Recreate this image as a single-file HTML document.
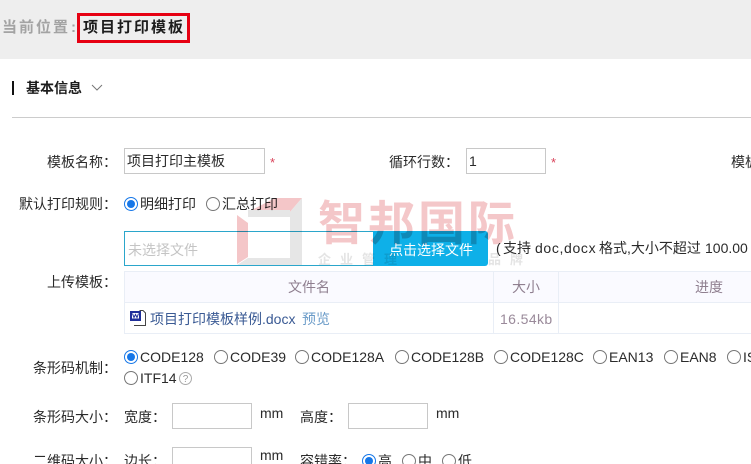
<!DOCTYPE html>
<html lang="zh"><head><meta charset="utf-8"><title>项目打印模板</title>
<style>
*{box-sizing:border-box}
html,body{margin:0;padding:0;overflow:hidden;width:751px;height:464px}
body{background:#fff;position:relative;font-family:"Liberation Sans","Noto Sans CJK SC",sans-serif;font-size:14px;color:#2a2a2a}
.a{position:absolute;white-space:nowrap;line-height:18px}
.l{position:absolute;white-space:nowrap;line-height:18px;text-align:right;width:105px;left:12px;color:#2a2a2a}
.i{position:absolute;border:1px solid #c8c8c8;background:#fff;height:26px;line-height:24px;padding-left:2px;color:#2a2a2a}
.r{position:absolute;width:14px;height:14px;border-radius:50%;border:1px solid #777;background:#fff}
.r.on{border:1px solid #1677e8}
.r.on:after{content:"";position:absolute;left:2px;top:2px;width:8px;height:8px;border-radius:50%;background:#1677e8}
.s{color:#d9435a;font-size:13px}
.c{font-size:14px}
.w{mix-blend-mode:multiply}
</style></head><body>
<div style="position:absolute;left:0;top:0;width:751px;height:59px;background:#eee"></div>
<div class="a" style="left:2px;top:19px;font-size:15px;font-weight:bold;color:#a3a3a3;letter-spacing:2px">当前位置</div>
<div class="a" style="left:71px;top:19px;font-size:15px;font-weight:bold;color:#a3a3a3">:</div>
<div style="position:absolute;left:77px;top:13px;width:113px;height:30px;border:3px solid #e60012"></div>
<div class="a" style="left:83px;top:19px;font-size:15px;font-weight:bold;color:#1c1c1c;letter-spacing:2px">项目打印模板</div>
<div style="position:absolute;left:12px;top:81px;width:2px;height:14px;background:#111"></div>
<div class="a" style="left:26px;top:79px;font-weight:bold;color:#1c1c1c">基本信息</div>
<svg style="position:absolute;left:90px;top:83px" width="14" height="10"><path d="M2 2 L7 7 L12 2" fill="none" stroke="#777" stroke-width="1"/></svg>
<div style="position:absolute;left:12px;top:117px;width:739px;height:1px;background:#ccc"></div>

<div class="l" style="top:153px">模板名称：</div>
<div class="i" style="left:124px;top:148px;width:141px">项目打印主模板</div>
<div class="a s" style="left:270px;top:154px">*</div>
<div class="a" style="left:389px;top:153px">循环行数：</div>
<div class="i" style="left:466px;top:148px;width:80px">1</div>
<div class="a s" style="left:551px;top:154px">*</div>
<div class="a" style="left:731px;top:153px;width:20px;overflow:hidden">模板类型</div>

<div class="l" style="top:195px">默认打印规则：</div>
<div class="r on" style="left:124px;top:197px"></div><div class="a" style="left:140px;top:195px">明细打印</div>
<div class="r" style="left:206px;top:197px"></div><div class="a" style="left:222px;top:195px">汇总打印</div>

<div style="position:absolute;left:124px;top:231px;width:250px;height:35px;border:1px solid #2ba6cb;border-right:none;background:transparent"></div>
<div class="a" style="left:128px;top:241px;color:#c4c4c4">未选择文件</div>
<div class="a" style="left:373px;top:231px;width:115px;height:35px;background:#0eb0e8;color:#fff;border-radius:0 3px 3px 0;line-height:39px;padding-left:16px">点击选择文件</div>
<div class="a" style="left:496px;top:239px">(</div>
<div class="a" style="left:503px;top:239px">支持</div>
<div class="a" style="left:535px;top:239px;letter-spacing:.65px">doc,docx</div>
<div class="a" style="left:599px;top:239px">格式,大小不超过</div>
<div class="a" style="left:705px;top:239px">100.00</div>

<svg class="w" style="position:absolute;left:230px;top:192px" width="80" height="80">
<polygon points="45,6 72,6 60,20 18,20" fill="#f4c6c8"/>
<polygon points="72,6 72,73 7,73 18,66 60,66 60,20" fill="#e6e6e6"/>
<polygon points="18,18 60,18 60,25 18,25" fill="#e6e6e6"/>
<polygon points="7,23 18,31 18,65 7,72" fill="#f4c6c8"/>
</svg>
<div class="a w" style="left:318px;top:195px;font-size:47px;line-height:50px;color:#f4c7c9;letter-spacing:3px;font-family:'Noto Sans CJK SC',sans-serif;font-weight:700">智邦国际</div>
<div class="a w" style="left:318px;top:251px;font-size:13px;color:#e4e4e4;letter-spacing:9px;font-weight:bold">企业管理</div>
<div class="a w" style="left:488px;top:251px;font-size:13px;color:#e4e4e4;letter-spacing:9px;font-weight:bold;width:40px;overflow:hidden">品牌</div>

<div class="l" style="top:273px">上传模板：</div>
<div style="position:absolute;left:124px;top:271px;width:627px;height:63px;border:1px solid #e9eef6;border-right:none;background:#fff"></div>
<div style="position:absolute;left:125px;top:272px;width:626px;height:31px;background:#fafaff;border-bottom:1px solid #e9eef6"></div>
<div style="position:absolute;left:493px;top:272px;width:1px;height:61px;background:#e9eef6"></div>
<div style="position:absolute;left:558px;top:272px;width:1px;height:61px;background:#e9eef6"></div>
<div class="a" style="left:288px;top:278px;color:#8f7f8f">文件名</div>
<div class="a" style="left:512px;top:278px;color:#8f7f8f">大小</div>
<div class="a" style="left:695px;top:278px;color:#8f7f8f">进度</div>
<svg style="position:absolute;left:130px;top:310px" width="17" height="16"><path d="M9.500 .5H13L15.500 3V15.500H4" fill="#fff" stroke="#444"/><rect x="0" y="1" width="11" height="10" fill="#1f2f9a"/><rect x="2" y="3" width="7" height="5.500" fill="#fff"/><path d="M2.500 3.500L4 7.500L5.500 4.500L7 7.500L8.500 3.500" fill="none" stroke="#1f2f9a"/></svg>
<div class="a" style="left:150px;top:310px;color:#3a5a94">项目打印模板样例.docx</div>
<div class="a" style="left:302px;top:310px;color:#6a9bc8">预览</div>
<div class="a" style="left:500px;top:310px;color:#9a8a9a;letter-spacing:.4px">16.54kb</div>

<div class="l" style="top:359px">条形码机制：</div>
<div class="r on" style="left:124px;top:350px"></div><div class="a c" style="left:140px;top:348px">CODE128</div>
<div class="r" style="left:214px;top:350px"></div><div class="a c" style="left:230px;top:348px">CODE39</div>
<div class="r" style="left:295px;top:350px"></div><div class="a c" style="left:311px;top:348px">CODE128A</div>
<div class="r" style="left:395px;top:350px"></div><div class="a c" style="left:411px;top:348px">CODE128B</div>
<div class="r" style="left:494px;top:350px"></div><div class="a c" style="left:510px;top:348px">CODE128C</div>
<div class="r" style="left:593px;top:350px"></div><div class="a c" style="left:609px;top:348px">EAN13</div>
<div class="r" style="left:664px;top:350px"></div><div class="a c" style="left:680px;top:348px">EAN8</div>
<div class="r" style="left:727px;top:350px"></div><div class="a c" style="left:743px;top:348px;width:8px;overflow:hidden">ISBN</div>
<div class="r" style="left:124px;top:371px"></div><div class="a c" style="left:140px;top:369px">ITF14</div>
<svg style="position:absolute;left:178px;top:371px" width="15" height="15"><circle cx="7.500" cy="7.500" r="6" fill="none" stroke="#aaa"/><text x="7.500" y="11" font-size="10" text-anchor="middle" fill="#999" font-family="Liberation Sans">?</text></svg>

<div class="l" style="top:408px">条形码大小：</div>
<div class="a" style="left:124px;top:408px">宽度：</div>
<div class="i" style="left:172px;top:403px;width:80px"></div>
<div class="a" style="left:260px;top:404px">mm</div>
<div class="a" style="left:300px;top:408px">高度：</div>
<div class="i" style="left:348px;top:403px;width:80px"></div>
<div class="a" style="left:436px;top:404px">mm</div>

<div class="l" style="top:452px;height:12px;overflow:hidden">二维码大小：</div>
<div class="a" style="left:124px;top:452px;height:12px;overflow:hidden">边长：</div>
<div class="i" style="left:172px;top:447px;width:80px;height:17px;border-bottom:none"></div>
<div class="a" style="left:260px;top:446px;height:18px">mm</div>
<div class="a" style="left:300px;top:452px;height:12px;overflow:hidden">容错率：</div>
<div style="position:absolute;left:362px;top:454px;width:110px;height:10px;overflow:hidden">
<div class="r on" style="left:0;top:0"></div><div class="a" style="left:16px;top:-2px">高</div>
<div class="r" style="left:40px;top:0"></div><div class="a" style="left:56px;top:-2px">中</div>
<div class="r" style="left:80px;top:0"></div><div class="a" style="left:96px;top:-2px">低</div>
</div>
</body></html>
